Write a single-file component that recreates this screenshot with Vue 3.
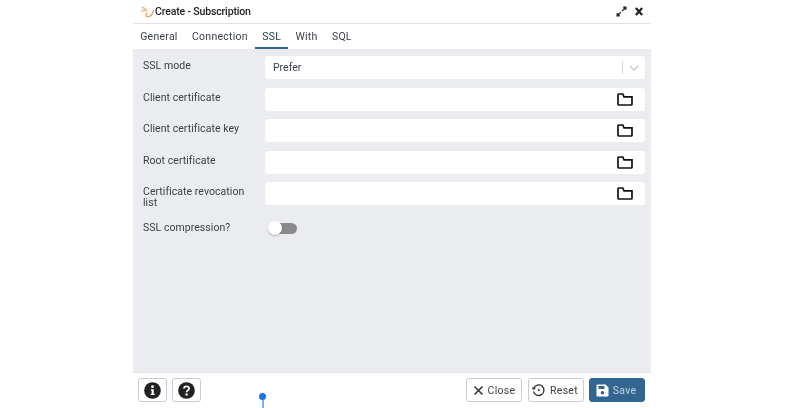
<script setup>
const rows = [
  { label: 'Client certificate' },
  { label: 'Client certificate key' },
  { label: 'Root certificate' },
  { label: 'Certificate revocation list' },
]
const tabs = ['General', 'Connection', 'SSL', 'With', 'SQL']
</script>

<template>
  <div class="page">
    <div class="dialog">
      <header class="title">
        <div class="title-left">
          <svg class="logo" width="14" height="14" viewBox="0 0 14 14" fill="none">
            <path d="M1.500 2.500l2.500 1.200 1.500 1.800M1 6l3-.5" stroke="#f0b88a" stroke-width="1.700" stroke-linecap="round"/>
            <path d="M12.500 5.500c-.8 3-2.800 6-5.300 6.300C5 12 4.500 9.800 5.800 8" stroke="#eba665" stroke-width="1.400" stroke-linecap="round"/>
          </svg>
          <span class="title-text">Create - Subscription</span>
        </div>
        <div class="title-actions">
          <svg width="11" height="11" viewBox="0 0 11 11" fill="none">
            <path d="M3.500 7.500l1.300-1.300" stroke="#222" stroke-width="1.200"/>
            <rect x="7.300" y="0.500" width="3.200" height="3.200" fill="#222"/>
            <rect x="0.500" y="7.300" width="3.200" height="3.200" fill="#222"/>
            <path d="M6 5l1.500-1.500" stroke="#222" stroke-width="1.200"/>
          </svg>
          <svg width="8" height="9" viewBox="0 0 8 9" fill="none" stroke="#222" stroke-width="2.300">
            <path d="M.8 1l6.400 7M7.200 1L.8 8"/>
          </svg>
        </div>
      </header>

      <nav class="tabs">
        <span v-for="t in tabs" :key="t" class="tab" :class="{ active: t === 'SSL' }">{{ t }}</span>
      </nav>

      <main class="content">
        <div class="row">
          <label class="label">SSL mode</label>
          <div class="field select">
            <span class="value">Prefer</span>
            <span class="sep"></span>
            <svg width="10" height="6" viewBox="0 0 10 6" fill="none" stroke="#c4c7cc" stroke-width="1.300">
              <path d="M1 1l4 4 4-4"/>
            </svg>
          </div>
        </div>
        <div v-for="r in rows" :key="r.label" class="row">
          <label class="label">{{ r.label }}</label>
          <div class="field">
            <svg class="folder" width="16" height="13" viewBox="0 0 16 13" fill="none" stroke="#111" stroke-width="1.700">
              <path d="M1 2V11.200a.8.800 0 0 0 .8.800h12.400a.8.800 0 0 0 .8-.8V3.800H7L5.800 1H1.800A.8.800 0 0 0 1 2z"/>
            </svg>
          </div>
        </div>
        <div class="row toggle-row">
          <label class="label">SSL compression?</label>
          <div class="switch"><span class="track"></span><span class="knob"></span></div>
        </div>
      </main>

      <footer class="footer">
        <div class="group">
          <button class="btn icon">
            <svg width="17" height="17" viewBox="0 0 18 18">
              <circle cx="9" cy="9" r="8.800" fill="#222"/>
              <circle cx="9" cy="5" r="1.500" fill="#fff"/>
              <path d="M7.300 7.600H10.300v4.800h1v1.300H7.100v-1.300h1V8.900h-.8z" fill="#fff"/>
            </svg>
          </button>
          <button class="btn icon">
            <svg width="17" height="17" viewBox="0 0 18 18">
              <circle cx="9" cy="9" r="8.800" fill="#222"/>
              <path d="M6.300 7c0-1.500 1.200-2.400 2.800-2.400S11.800 5.600 11.800 7c0 1.800-2.700 1.800-2.700 3.800" fill="none" stroke="#fff" stroke-width="1.800"/>
              <circle cx="9.100" cy="13.300" r="1.300" fill="#fff"/>
            </svg>
          </button>
        </div>
        <div class="group wide">
          <button class="btn">
            <svg width="11" height="11" viewBox="0 0 11 11" fill="none" stroke="#333" stroke-width="1.600">
              <path d="M1.500 1.500l8 8M9.500 1.500l-8 8"/>
            </svg>
            Close
          </button>
          <button class="btn reset">
            <svg width="15" height="14" viewBox="0 0 14 14" fill="none" stroke="#333" stroke-width="1.300">
              <path d="M2.200 5.200A5.300 5.300 0 1 1 2 8.500"/>
              <path d="M.8 4.800l1.500 1.400 1.500-1.500" stroke-width="1.200"/>
              <circle cx="7.300" cy="7" r="1.100" fill="#333" stroke="none"/>
            </svg>
            Reset
          </button>
          <button class="btn primary">
            <svg width="13" height="13" viewBox="0 0 13 13">
              <path d="M1.500 0.500h8l3 3v8a1 1 0 0 1-1 1h-10a1 1 0 0 1-1-1v-10a1 1 0 0 1 1-1z" fill="#fff"/>
              <rect x="2.500" y="2" width="6" height="3" fill="#326690"/>
              <circle cx="6.500" cy="8.800" r="1.800" fill="#326690"/>
            </svg>
            Save
          </button>
        </div>
      </footer>
    </div>
    <div class="pin"><span class="dot"></span><span class="stem"></span></div>
  </div>
</template>

<style>
html, body { margin: 0; background: #fff; }
</style>

<style scoped>
.page {
  position: relative;
  width: 785px;
  height: 408px;
  overflow: hidden;
  background: #fff;
  font-family: Roboto, "Liberation Sans", sans-serif;
  color: #3c4147;
  font-size: 10.500px;
}
.dialog {
  width: 518px;
  height: 408px;
  margin-left: 133px;
  display: flex;
  flex-direction: column;
  background: #fff;
  filter: blur(0.55px);
}
.title {
  height: 24px;
  box-sizing: border-box;
  flex: none;
  display: flex;
  align-items: center;
  justify-content: space-between;
  border-bottom: 1px solid #dfe1e5;
  padding: 0 8px 0 8px;
}
.title-left { display: flex; align-items: center; }
.title-text { font-weight: 500; font-size: 10.500px; color: #222; letter-spacing: -0.15px; }
.title-actions { display: flex; gap: 8px; align-items: center; }
.tabs {
  height: 25px;
  flex: none;
  display: flex;
  align-items: stretch;
}
.tab {
  padding: 0 7.200px;
  line-height: 25px;
  letter-spacing: 0.25px;
  color: #3c4147;
}
.tab.active { border-bottom: 2px solid #326690; color: #2a3a48; box-sizing: border-box; }
.content {
  flex: 1;
  background: #ebecf0;
  padding: 7px 6px 0 10px;
  display: flex;
  flex-direction: column;
  gap: 8.500px;
}
.row { display: flex; align-items: flex-start; min-height: 23px; }
.label {
  width: 122px;
  flex: none;
  line-height: 10.500px;
  padding-top: 5px;
  padding-right: 12px;
  box-sizing: border-box;
  letter-spacing: 0.05px;
}
.field {
  flex: 1;
  height: 23px;
  background: #fff;
  border-radius: 3px;
  display: flex;
  align-items: center;
  justify-content: flex-end;
  padding: 0 12px;
}
.select { padding: 0 6px 0 8px; }
.value { margin-right: auto; }
.sep { width: 1px; height: 13px; background: #d4d6da; margin-right: 6px; }
.toggle-row { min-height: 20px; }
.toggle-row .label { padding-top: 6px; }
.switch { position: relative; width: 29px; height: 14px; margin-left: 3px; margin-top: 4px; }
.track { position: absolute; left: 3px; right: 0; top: 2px; height: 11px; background: #8a8a8e; border-radius: 6px; }
.knob { position: absolute; left: 0; top: 0; width: 14px; height: 14px; background: #fff; border-radius: 50%; box-shadow: 0 1px 2px rgba(0,0,0,.25); }
.footer {
  height: 36px;
  box-sizing: border-box;
  flex: none;
  display: flex;
  justify-content: space-between;
  align-items: flex-start;
  padding: 5px 6px 0 5px;
  border-top: 1px solid #dfe1e5;
}
.group { display: flex; gap: 5px; }
.group.wide { gap: 5.500px; }
.btn {
  height: 24px;
  box-sizing: border-box;
  border: 1px solid #c8ccd2;
  border-radius: 3px;
  background: #fff;
  font: inherit;
  letter-spacing: 0.3px;
  color: #3c4147;
  display: flex;
  align-items: center;
  justify-content: center;
  gap: 4px;
  padding: 0;
  width: 56px;
}
.btn.icon { width: 29px; }
.btn.reset { padding-right: 2px; }
.btn.primary { background: #326690; border-color: #326690; color: #c5d4e0; padding-right: 2px; }
.pin { position: absolute; left: 259px; top: 393px; width: 8px; height: 15px; }
.dot { position: absolute; left: 0; top: 0; width: 7px; height: 7px; border-radius: 50%; background: #1a73e8; }
.stem { position: absolute; left: 3px; top: 7px; width: 1.500px; height: 8px; background: #7fb0ee; }
</style>
